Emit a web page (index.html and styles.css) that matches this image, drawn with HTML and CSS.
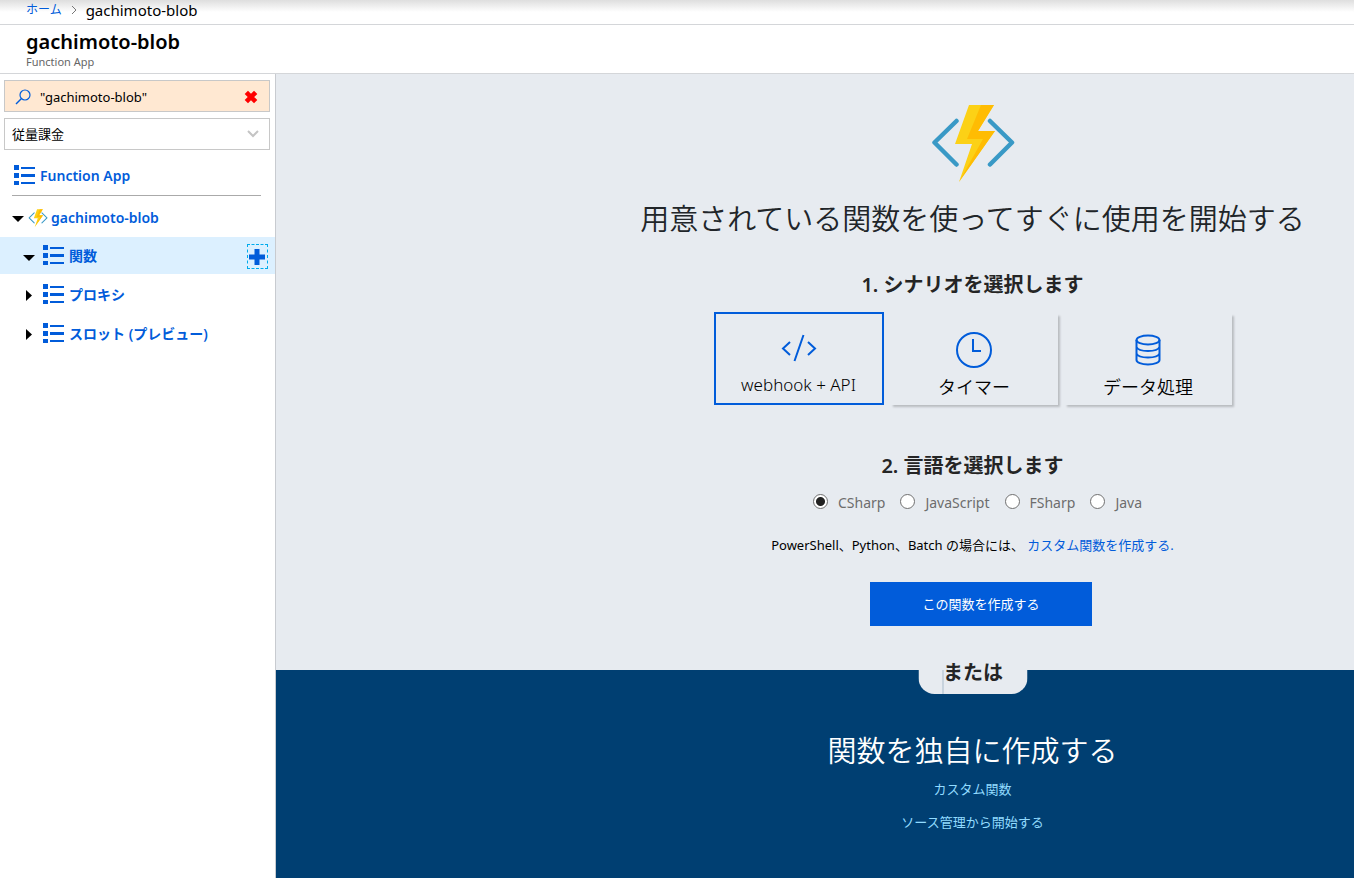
FILE: index.html
```html
<!DOCTYPE html>
<html lang="ja">
<head>
  <meta charset="UTF-8">
  <meta name="viewport" content="width=device-width, initial-scale=1.0">
  <title>gachimoto-blob</title>
  <link rel="stylesheet" href="styles.css">
</head>
<body>
  <svg class="sprite" aria-hidden="true">
    <symbol id="list" viewBox="0 0 22 20">
      <path d="M0 0h5v5H0zM0 8h5v5H0zM0 16h5v4H0zM7 2h14v2H7zM7 9h14v3H7zM7 17h14v2H7z" fill="#015cda"/>
    </symbol>
    <symbol id="functions" viewBox="0 0 84 78">
      <path d="M25.500 17L3.500 38.500l22 22M59 17l22 21.500-22 22" fill="none" stroke="#3999c6" stroke-width="4.500" stroke-linecap="round" stroke-linejoin="round"/>
      <path d="M38 1h25L47 27h17L28 78l13-38H24z" fill="#fcd116"/>
      <path d="M50 1h13L47 27h17L28 78l24-43H36z" fill="#ffb900" opacity=".85"/>
    </symbol>
  </svg>

  <nav class="breadcrumb" aria-label="breadcrumb">
    <a href="#">ホーム</a>
    <svg class="crumb-arrow" viewBox="0 0 6 10"><path d="M1 1l4 4-4 4" fill="none" stroke="#777"/></svg>
    <span>gachimoto-blob</span>
  </nav>
  <header class="title">
    <h1>gachimoto-blob</h1>
    <p>Function App</p>
  </header>

  <div class="page">
    <aside class="sidebar">
      <div class="search">
        <svg class="search-icon" viewBox="0 0 16 16"><circle cx="10" cy="6" r="5" fill="none" stroke="#015cda" stroke-width="1.200"/><path d="M6.500 9.500L1 15" stroke="#015cda" stroke-width="1.400"/></svg>
        <input type="text" aria-label="検索" value="&quot;gachimoto-blob&quot;">
        <button class="clear" aria-label="クリア"><svg viewBox="0 0 12 12"><path d="M2 2l8 8M10 2l-8 8" stroke="#f00" stroke-width="4"/></svg></button>
      </div>
      <div class="plan">
        <select aria-label="サブスクリプション"><option>従量課金</option></select>
        <svg class="chevron" viewBox="0 0 12 8"><path d="M1 1l5 5 5-5" fill="none" stroke="#c4c4c4" stroke-width="2"/></svg>
      </div>
      <a class="apps" href="#"><svg class="list-icon"><use href="#list"/></svg>Function App</a>
      <ul class="tree">
        <li class="app">
          <svg class="arrow" viewBox="0 0 12 12"><path d="M0 4h12L6 10z"/></svg>
          <svg class="app-icon"><use href="#functions"/></svg>
          <a href="#">gachimoto-blob</a>
        </li>
        <li class="selected">
          <svg class="arrow" viewBox="0 0 12 12"><path d="M0 5h12L6 11z"/></svg>
          <svg class="list-icon"><use href="#list"/></svg>
          <a href="#">関数</a>
          <button class="add" aria-label="追加"><svg viewBox="0 0 16 16"><path d="M8 0v16M0 8h16" stroke="#015cda" stroke-width="5"/></svg></button>
        </li>
        <li>
          <svg class="arrow" viewBox="0 0 12 12"><path d="M3 1v11l6-5.500z"/></svg>
          <svg class="list-icon"><use href="#list"/></svg>
          <a href="#">プロキシ</a>
        </li>
        <li>
          <svg class="arrow" viewBox="0 0 12 12"><path d="M3 1v11l6-5.500z"/></svg>
          <svg class="list-icon"><use href="#list"/></svg>
          <a href="#">スロット (プレビュー)</a>
        </li>
      </ul>
    </aside>

    <main class="content">
      <section class="quickstart">
        <svg class="logo"><use href="#functions"/></svg>
        <h2>用意されている関数を使ってすぐに使用を開始する</h2>
        <h3>1. シナリオを選択します</h3>
        <div class="cards">
          <button class="card active">
            <svg viewBox="0 0 36 36"><path d="M9 12l-7 6.500 7 6.500M27 12l7 6.500-7 6.500M22.500 5l-9 26" fill="none" stroke="#015cda" stroke-width="2"/></svg>
            webhook + API
          </button>
          <button class="card">
            <svg viewBox="0 0 36 36"><circle cx="18" cy="18" r="17" fill="none" stroke="#015cda" stroke-width="2"/><path d="M17 7v12h8" fill="none" stroke="#015cda" stroke-width="2"/></svg>
            タイマー
          </button>
          <button class="card">
            <svg viewBox="0 0 36 36"><g fill="none" stroke="#015cda" stroke-width="2"><ellipse cx="18" cy="8" rx="11.500" ry="4.500"/><path d="M6.500 8v20c0 2.500 5 4.500 11.500 4.500s11.500-2 11.500-4.500V8M6.500 15c1 2.500 6 4 11.500 4s10.500-1.500 11.500-4M6.500 21.500c1 2.500 6 4 11.500 4s10.500-1.500 11.500-4"/></g></svg>
            データ処理
          </button>
        </div>
        <h3>2. 言語を選択します</h3>
        <div class="languages">
          <label><input type="radio" name="language" checked>CSharp</label>
          <label><input type="radio" name="language">JavaScript</label>
          <label><input type="radio" name="language">FSharp</label>
          <label><input type="radio" name="language">Java</label>
        </div>
        <p class="other">PowerShell、Python、Batch の場合には、 <a href="#">カスタム関数を作成する.</a></p>
        <button class="create">この関数を作成する</button>
      </section>
      <section class="custom">
        <div class="or">または</div>
        <h2>関数を独自に作成する</h2>
        <a href="#">カスタム関数</a>
        <a href="#">ソース管理から開始する</a>
      </section>
    </main>
  </div>
</body>
</html>
```
FILE: styles.css
```css
* {
  box-sizing: border-box;
}
body {
  margin: 0;
  min-height: 100vh;
  display: flex;
  flex-direction: column;
  background: #fff;
  color: #000;
  font-family: "Noto Sans", "Noto Sans CJK JP", sans-serif;
  font-size: 13px;
  line-height: 20px;
}
h1, h2, h3, p, ul {
  margin: 0;
  padding: 0;
}
a {
  color: #015cda;
  text-decoration: none;
}
button, input, select {
  font-family: inherit;
  font-size: inherit;
  line-height: inherit;
}
.sprite {
  position: absolute;
  width: 0;
  height: 0;
}

/* header */
.breadcrumb {
  display: flex;
  align-items: center;
  gap: 9px;
  height: 25px;
  padding: 0 26px 5px;
  border-bottom: 1px solid #d4d6d9;
  background: linear-gradient(#dedede, #fff 12px);
  font-size: 15px;
}
.breadcrumb a {
  font-size: 12px;
}
.crumb-arrow {
  width: 6px;
  height: 10px;
}
.title {
  height: 49px;
  padding: 5px 26px 0;
  border-bottom: 1px solid #d4d6d9;
}
.title h1 {
  font-size: 20px;
  font-weight: 600;
  line-height: 24px;
}
.title p {
  color: #666;
  font-size: 11px;
  line-height: 15px;
}

/* sidebar */
.page {
  flex: 1;
  display: flex;
}
.sidebar {
  flex: 0 0 276px;
  padding-top: 6px;
  border-right: 1px solid #c8cbd0;
}
.search, .plan {
  display: flex;
  align-items: center;
  height: 32px;
  margin: 0 5px 6px 4px;
  border: 1px solid #c8c8c8;
}
.search {
  padding: 1px 11px 0 10px;
  gap: 9px;
  background: #ffe8d2;
}
.search-icon {
  width: 16px;
  height: 16px;
}
.search input {
  flex: 1;
  min-width: 0;
  padding: 0;
  border: 0;
  background: none;
}
.clear {
  width: 14px;
  height: 14px;
  padding: 0;
  border: 0;
  background: none;
}
.clear svg {
  display: block;
}
.plan {
  display: grid;
}
.plan select, .chevron {
  grid-area: 1 / 1;
}
.plan select {
  height: 30px;
  padding: 0 7px;
  border: 0;
  background: none;
  color: #000;
  appearance: none;
}
.chevron {
  justify-self: end;
  width: 12px;
  height: 8px;
  margin-right: 10px;
  pointer-events: none;
}
.list-icon {
  flex: none;
  width: 22px;
  height: 20px;
  margin-bottom: 2px;
}
.apps {
  display: flex;
  gap: 4px;
  align-items: center;
  height: 40px;
  margin: 0 14px 4px 12px;
  padding: 1px 2px 0;
  border-bottom: 1px solid #aaa;
  font-size: 14px;
  font-weight: 600;
}
.tree {
  list-style: none;
  font-size: 14px;
  font-weight: 600;
}
.tree li {
  display: flex;
  align-items: center;
  gap: 4px;
  height: 37px;
  margin-bottom: 2px;
  padding: 0 7px 0 23px;
}
.tree .app {
  gap: 3px;
  margin-bottom: 0;
  padding: 0 12px 2px;
}
.tree .selected {
  background: #dcf0ff;
}
.arrow {
  width: 12px;
  height: 12px;
  margin-right: 4px;
}
.app .arrow {
  margin-right: 1px;
}
.app-icon {
  width: 20px;
  height: 18px;
}
.add {
  width: 21px;
  height: 25px;
  margin: 2px 0 0 auto;
  padding: 0 1px;
  border: 1px dashed #00abec;
  background: none;
}
.add svg {
  display: block;
  width: 16px;
}

/* content */
.content {
  flex: 1;
  display: flex;
  flex-direction: column;
  min-width: 0;
}
.quickstart, .custom {
  display: flex;
  flex-direction: column;
  align-items: center;
  padding-left: 315px;
}
.quickstart {
  padding-top: 30px;
  padding-bottom: 44px;
  background: #e7ebf0;
}
.logo {
  width: 84px;
  height: 78px;
}
h2 {
  color: #212529;
  font-size: 29px;
  font-weight: 350;
  line-height: 40px;
  white-space: nowrap;
}
.quickstart h2 {
  margin: 17px 0 34px;
}
h3 {
  color: #252525;
  font-size: 20px;
  font-weight: 600;
  line-height: 24px;
}
.cards {
  display: flex;
  align-items: flex-end;
  gap: 7px;
  margin: 15px 0 49px;
}
.card {
  display: flex;
  flex-direction: column;
  align-items: center;
  gap: 5px;
  width: 167px;
  height: 91px;
  padding: 18px 0 0;
  border: 0;
  background: #e7ebf0;
  box-shadow: 2px 2px 2px #b9bcc0;
  color: #000;
  font-size: 18px;
  font-weight: 350;
  line-height: 28px;
}
.card svg {
  width: 36px;
  height: 36px;
}
.card.active {
  width: 170px;
  height: 93px;
  padding-top: 16px;
  border: 2px solid #015cda;
  box-shadow: none;
  font-size: 17px;
}
.languages {
  display: flex;
  gap: 15px;
  margin: 15px 0 22px 10px;
  color: #6d6d6d;
  font-size: 14px;
}
.languages label {
  display: flex;
  align-items: center;
}
.languages input {
  width: 15px;
  height: 15px;
  margin: 0 10px 4px 0;
  border: 1px solid #707070;
  border-radius: 50%;
  background: #fff;
  appearance: none;
}
.languages input:checked {
  background: radial-gradient(#222 0 4px, #fff 5px);
}
.create {
  width: 222px;
  height: 44px;
  margin: 27px 0 0 17px;
  border: 0;
  background: #015cda;
  color: #fff;
}
.custom {
  position: relative;
  flex: 1;
  padding-top: 61px;
  background: #003f72;
}
.custom h2 {
  margin-bottom: 8px;
  color: #fff;
}
.custom a {
  margin-bottom: 13px;
  color: #91dbff;
}
/* tab that overlaps the two sections */
.or {
  position: absolute;
  top: -14px;
  left: calc(50% + 158px);
  width: 109px;
  height: 38px;
  border-radius: 0 0 16px 16px;
  background: linear-gradient(#a9bccb, #a9bccb) 24px 14px / 1px 24px no-repeat #e7ebf0;
  color: #252525;
  font-size: 20px;
  font-weight: 600;
  line-height: 34px;
  text-align: center;
  transform: translateX(-50%);
}
```
